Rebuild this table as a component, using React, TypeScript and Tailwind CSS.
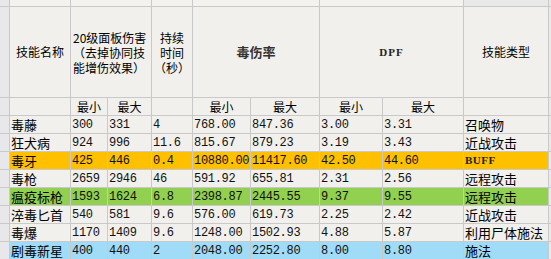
import React from 'react'

type Row = {
  name: string
  v: string[]
  type: string
  bg?: string
}

const rows: Row[] = [
  { name: '毒藤', v: ['300', '331', '4', '768.00', '847.36', '3.00', '3.31'], type: '召唤物' },
  { name: '狂犬病', v: ['924', '996', '11.6', '815.67', '879.23', '3.19', '3.43'], type: '近战攻击' },
  { name: '毒牙', v: ['425', '446', '0.4', '10880.00', '11417.60', '42.50', '44.60'], type: 'BUFF', bg: 'bg-[#ffc000]' },
  { name: '毒枪', v: ['2659', '2946', '46', '591.92', '655.81', '2.31', '2.56'], type: '远程攻击' },
  { name: '瘟疫标枪', v: ['1593', '1624', '6.8', '2398.87', '2445.55', '9.37', '9.55'], type: '远程攻击', bg: 'bg-[#92d050]' },
  { name: '淬毒匕首', v: ['540', '581', '9.6', '576.00', '619.73', '2.25', '2.42'], type: '近战攻击' },
  { name: '毒爆', v: ['1170', '1409', '9.6', '1248.00', '1502.93', '4.88', '5.87'], type: '利用尸体施法' },
  { name: '剧毒新星', v: ['400', '440', '2', '2048.00', '2252.80', '8.00', '8.80'], type: '施法', bg: 'bg-[#a0dbf7]' },
]

const cjk = "font-['Noto_Sans_CJK_SC',sans-serif]"
const mono = "font-['Liberation_Mono','Noto_Sans_CJK_SC',monospace]"

export default function App() {
  return (
    <div className="w-[551px] h-[259px] overflow-hidden bg-[#c9c9c9] text-black">
      <div className="grid grid-cols-[9px_60px_36px_43px_40px_57px_68px_62px_80px_84px_2px] grid-rows-[6px_90px_17px_repeat(8,17px)] gap-px">
        {/* 上方残留行 */}
        <div className="bg-[#e8e8ea]" />
        <div className="bg-[#f3f2ef]" />
        <div className="col-span-2 bg-[#f3f2ef]" />
        <div className="bg-[#f3f2ef]" />
        <div className="col-span-2 bg-[#f3f2ef]" />
        <div className="col-span-2 bg-[#f3f2ef]" />
        <div className="bg-[#e9e9e9]" />
        <div className="bg-[#e9e9e9]" />

        {/* 表头 */}
        <div className="bg-[#e8e8ea]" />
        <div className={`bg-[#f2f0ec] flex items-center justify-center text-[12px] ${cjk}`}>技能名称</div>
        <div className={`col-span-2 bg-[#f2f0ec] flex items-center pl-[2px] text-[12px] leading-[15px] ${cjk}`}>
          <div>
            20级面板伤害
            <br />
            （去掉协同技
            <br />
            能增伤效果）
          </div>
        </div>
        <div className={`bg-[#f2f0ec] flex items-center justify-center text-center text-[12px] leading-[15px] ${cjk}`}>
          <div>
            持续
            <br />
            时间
            <br />
            （秒）
          </div>
        </div>
        <div className={`col-span-2 bg-[#f2f0ec] flex items-center justify-center text-[13px] font-bold text-[#333] ${cjk}`}>毒伤率</div>
        <div className="col-span-2 bg-[#f2f0ec] flex items-center justify-center text-[11px] font-bold tracking-[1px] text-[#222] font-['Liberation_Serif',serif]">DPF</div>
        <div className={`bg-[#f2f0ec] flex items-center justify-center text-[12px] ${cjk}`}>技能类型</div>
        <div className="bg-[#e9e9e9]" />

        {/* 子表头 */}
        <div className="bg-[#e8e8ea]" />
        <div className="bg-[#f2f0ec]" />
        {['最小', '最大'].map(t => (
          <div key={'a' + t} className={`bg-[#f2f0ec] flex items-center justify-center text-[12px] ${cjk}`}>{t}</div>
        ))}
        <div className="bg-[#f2f0ec]" />
        {['最小', '最大', '最小', '最大'].map((t, i) => (
          <div key={'b' + i} className={`bg-[#f2f0ec] flex items-center justify-center text-[12px] ${cjk}`}>{t}</div>
        ))}
        <div className="bg-[#f2f0ec]" />
        <div className="bg-[#e9e9e9]" />

        {/* 数据行 */}
        {rows.map(r => {
          const bg = r.bg ?? 'bg-[#f2f0ec]'
          return (
            <React.Fragment key={r.name}>
              <div className="bg-[#e8e8ea]" />
              <div className={`${bg} flex items-center pl-px text-[13px] ${cjk}`}>{r.name}</div>
              {r.v.map((n, i) => (
                <div key={i} className={`${bg} flex items-center pl-px text-[12px] tracking-[-0.3px] text-[#111] ${mono}`}>{n}</div>
              ))}
              {r.type === 'BUFF' ? (
                <div className={`${bg} flex items-center pl-px text-[11px] font-bold tracking-[0.5px] text-[#222] font-['Liberation_Serif',serif]`}>BUFF</div>
              ) : (
                <div className={`${bg} flex items-center pl-px text-[13px] ${cjk}`}>{r.type}</div>
              )}
              <div className="bg-[#e9e9e9]" />
            </React.Fragment>
          )
        })}
      </div>
    </div>
  )
}
